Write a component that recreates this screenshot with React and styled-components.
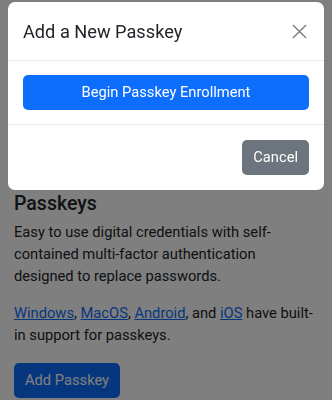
import styled, { createGlobalStyle } from 'styled-components';

const GlobalStyle = createGlobalStyle`
  html, body {
    margin: 0;
    padding: 0;
    background: #ffffff;
    font-family: Roboto, "Liberation Sans", sans-serif;
    color: #212529;
  }
  * { box-sizing: border-box; }
`;

const Page = styled.div`
  padding: 192px 14px 0;
  height: 400px;
  overflow: hidden;
`;

const Heading = styled.h3`
  margin: 0 0 6px;
  font-size: 19.5px;
  font-weight: 500;
  line-height: 1.2;
`;

const Text = styled.p`
  margin: 0 0 15px;
  font-size: 14.7px;
  line-height: 22px;
`;

const Link = styled.a`
  color: #0d6efd;
  text-decoration: underline;
`;

const Actions = styled.div`
  padding-top: 2px;
`;

const Button = styled.button`
  display: ${(p) => (p.$block ? 'block' : 'inline-block')};
  width: ${(p) => (p.$block ? '100%' : 'auto')};
  height: 35px;
  padding: 0 11px;
  border: none;
  border-radius: 5px;
  background: ${(p) => p.$bg};
  color: #ffffff;
  font-family: inherit;
  font-size: 14.7px;
  line-height: 35px;
  text-align: center;
`;

const Backdrop = styled.div`
  position: fixed;
  inset: 0;
  background: rgba(0, 0, 0, 0.5);
`;

const Modal = styled.div`
  position: fixed;
  top: 2px;
  left: 8px;
  right: 8px;
  background: #ffffff;
  border-radius: 7px;
  overflow: hidden;
`;

const Header = styled.div`
  display: flex;
  align-items: center;
  justify-content: space-between;
  height: 59px;
  padding: 0 15px;
  border-bottom: 1px solid #e9ecef;
`;

const Title = styled.h5`
  margin: 0;
  font-size: 18.2px;
  font-weight: 400;
  color: #212529;
`;

const Close = styled.button`
  display: flex;
  align-items: center;
  justify-content: center;
  width: 20px;
  height: 20px;
  padding: 0;
  border: none;
  background: none;
`;

const Body = styled.div`
  padding: 14px 15px 14px;
  border-bottom: 1px solid #e9ecef;
`;

const Footer = styled.div`
  display: flex;
  justify-content: flex-end;
  padding: 15px 15px 15px;
`;

export default function App() {
  return (
    <>
      <GlobalStyle />
      <Page>
        <Heading>Passkeys</Heading>
        <Text>
          Easy to use digital credentials with self-contained multi-factor authentication
          designed to replace passwords.
        </Text>
        <Text>
          <Link href="#">Windows</Link>, <Link href="#">MacOS</Link>,{' '}
          <Link href="#">Android</Link>, and <Link href="#">iOS</Link> have built-in support
          for passkeys.
        </Text>
        <Actions>
          <Button $bg="#0d6efd">Add Passkey</Button>
        </Actions>
      </Page>
      <Backdrop />
      <Modal>
        <Header>
          <Title>Add a New Passkey</Title>
          <Close aria-label="Close">
            <svg width="15" height="15" viewBox="0 0 16 16">
              <path d="M1 1L15 15M15 1L1 15" stroke="#808080" strokeWidth="1.6" fill="none" />
            </svg>
          </Close>
        </Header>
        <Body>
          <Button $block $bg="#0d6efd">Begin Passkey Enrollment</Button>
        </Body>
        <Footer>
          <Button $bg="#6c757d">Cancel</Button>
        </Footer>
      </Modal>
    </>
  );
}
